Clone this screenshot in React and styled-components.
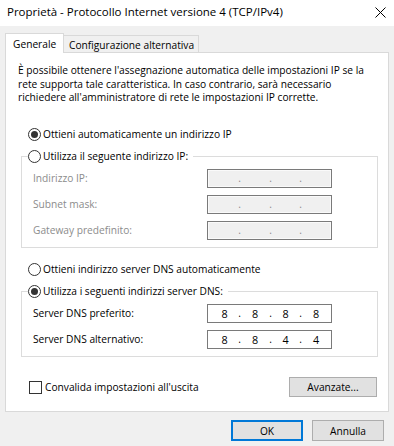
import React from 'react';
import styled, { createGlobalStyle } from 'styled-components';

const GlobalStyle = createGlobalStyle`
    html, body {
        margin: 0;
        padding: 0;
        background: #f0f0f0;
    }
    * {
        box-sizing: border-box;
    }
`

const Window = styled.div`
    width: 394px;
    height: 446px;
    overflow: hidden;
    background: #f0f0f0;
    display: flex;
    flex-direction: column;
    font-family: "Open Sans", "Noto Sans", sans-serif;
    font-size: 10.2px;
    color: #000;
`

const TitleBar = styled.div`
    height: 26px;
    flex-shrink: 0;
    background: #fff;
    display: flex;
    align-items: center;
    justify-content: space-between;
    padding: 0 8px 3px 7px;
`

const Title = styled.span`
    font-size: 11.5px;
`

const CloseButton = styled.span`
    display: flex;
    align-items: center;
    justify-content: center;
    width: 12px;
    height: 12px;
    margin-top: 2px;
`

const Body = styled.div`
    padding: 7px 5px 0 5px;
    display: flex;
    flex-direction: column;
`

const TabStrip = styled.div`
    display: flex;
    align-items: flex-end;
    height: 19px;
    position: relative;
    z-index: 1;
`

const Tab = styled.div`
    line-height: 14px;
    white-space: nowrap;
    ${p => p.$active ? `
        height: 20px;
        margin-bottom: -1px;
        padding: 3px 7px 0 7px;
        width: 59px;
        background: #fff;
        border: 1px solid #d9d9d9;
        border-bottom: none;
    ` : `
        height: 17px;
        padding: 2px 4px 0 5px;
        width: 135px;
        background: #f0f0f0;
        border: 1px solid #d9d9d9;
        border-left: none;
        border-bottom: none;
    `}
`

const Panel = styled.div`
    background: #fff;
    border: 1px solid #d9d9d9;
    display: flex;
    flex-direction: column;
`

const Description = styled.p`
    margin: 11px 12px 0 12px;
    line-height: 13.5px;
`

const OptionRow = styled.label`
    display: flex;
    align-items: center;
    gap: 2px;
    height: 16px;
    line-height: 16px;
    margin-top: ${p => p.$top || 0}px;
    margin-left: ${p => p.$left || 0}px;
    white-space: nowrap;
`

const RadioCircle = styled.span`
    width: 13px;
    height: 13px;
    flex-shrink: 0;
    border: 1px solid #333;
    border-radius: 50%;
    background: #fff;
    display: flex;
    align-items: center;
    justify-content: center;

    &::after {
        content: '';
        width: 7px;
        height: 7px;
        border-radius: 50%;
        background: ${p => p.$checked ? '#333' : 'transparent'};
    }
`

const CheckBox = styled.span`
    width: 13px;
    height: 13px;
    flex-shrink: 0;
    border: 1px solid #333;
    background: #fff;
    margin-right: 1px;
`

const Group = styled.fieldset`
    margin: ${p => p.$top || 0}px 10px 0 15px;
    padding: 0;
    min-width: 0;
    border: 1px solid #dcdcdc;
`

const Legend = styled.legend`
    margin-left: 6px;
    padding: 0 5px 0 0;
`

const Fields = styled.div`
    display: grid;
    grid-template-columns: 174px 125px;
    row-gap: 7px;
    padding: 5px 0 7px 11px;
`

const FieldLabel = styled.span`
    height: 19px;
    line-height: 19px;
    color: ${p => p.$disabled ? '#8c8c8c' : '#000'};
`

const IpBox = styled.div`
    height: 19px;
    border: 1px solid #7a7a7a;
    background: ${p => p.$disabled ? '#f0f0f0' : '#fff'};
    box-shadow: ${p => p.$disabled ? 'inset 0 0 0 1px #fafafa' : 'none'};
    display: grid;
    grid-template-columns: 27px 3px 28px 3px 27px 3px 28px;
    padding-left: 3px;
    line-height: 17px;
    text-align: center;
    color: ${p => p.$disabled ? '#8c8c8c' : '#000'};
`

const Segment = styled.span`
    font-size: 10.8px;
`

const Dot = styled.span``

const BottomRow = styled.div`
    display: flex;
    align-items: center;
    justify-content: space-between;
    margin: 20px 11px 14px 23px;
`

const CheckRow = styled.label`
    display: flex;
    align-items: center;
    gap: 2px;
`

const Button = styled.button`
    font-family: inherit;
    font-size: 10.2px;
    color: #000;
    height: ${p => p.$height || 21}px;
    width: ${p => p.$width || 72}px;
    padding: 0;
    background: #e1e1e1;
    border: ${p => p.$default ? '2px solid #0078d7' : '1px solid #adadad'};
    border-radius: 0;
`

const Footer = styled.div`
    display: flex;
    justify-content: flex-end;
    gap: 9px;
    padding: 8px 5px 0 0;
`

const CloseIcon = () => (
    <svg width="11" height="11" viewBox="0 0 11 11">
        <path d="M0.5 0.5 L10.5 10.5 M10.5 0.5 L0.5 10.5" stroke="#000" strokeWidth="1" fill="none" />
    </svg>
)

const IpField = ({ value, disabled }) => {
    const parts = value ? value.split('.') : ['', '', '', ''];
    return (
        <IpBox $disabled={disabled}>
            {parts.map((part, i) => (
                <React.Fragment key={i}>
                    {i > 0 && <Dot>.</Dot>}
                    <Segment>{part}</Segment>
                </React.Fragment>
            ))}
        </IpBox>
    )
}

const App = () => {
    return (
        <Window>
            <GlobalStyle />
            <TitleBar>
                <Title>Proprietà - Protocollo Internet versione 4 (TCP/IPv4)</Title>
                <CloseButton><CloseIcon /></CloseButton>
            </TitleBar>
            <Body>
                <TabStrip>
                    <Tab $active>Generale</Tab>
                    <Tab>Configurazione alternativa</Tab>
                </TabStrip>
                <Panel>
                    <Description>
                        È possibile ottenere l'assegnazione automatica delle impostazioni IP se la
                        rete supporta tale caratteristica. In caso contrario, sarà necessario
                        richiedere all'amministratore di rete le impostazioni IP corrette.
                    </Description>

                    <OptionRow $top={21.5} $left={22}>
                        <RadioCircle $checked />
                        Ottieni automaticamente un indirizzo IP
                    </OptionRow>

                    <Group $top={6}>
                        <Legend>
                            <OptionRow>
                                <RadioCircle />
                                Utilizza il seguente indirizzo IP:
                            </OptionRow>
                        </Legend>
                        <Fields>
                            <FieldLabel $disabled>Indirizzo IP:</FieldLabel>
                            <IpField disabled />
                            <FieldLabel $disabled>Subnet mask:</FieldLabel>
                            <IpField disabled />
                            <FieldLabel $disabled>Gateway predefinito:</FieldLabel>
                            <IpField disabled />
                        </Fields>
                    </Group>

                    <OptionRow $top={13} $left={22}>
                        <RadioCircle />
                        Ottieni indirizzo server DNS automaticamente
                    </OptionRow>

                    <Group $top={6}>
                        <Legend>
                            <OptionRow>
                                <RadioCircle $checked />
                                Utilizza i seguenti indirizzi server DNS:
                            </OptionRow>
                        </Legend>
                        <Fields>
                            <FieldLabel>Server DNS preferito:</FieldLabel>
                            <IpField value="8.8.8.8" />
                            <FieldLabel>Server DNS alternativo:</FieldLabel>
                            <IpField value="8.8.4.4" />
                        </Fields>
                    </Group>

                    <BottomRow>
                        <CheckRow>
                            <CheckBox />
                            Convalida impostazioni all'uscita
                        </CheckRow>
                        <Button $width={88} $height={20}>Avanzate...</Button>
                    </BottomRow>
                </Panel>
                <Footer>
                    <Button $default>OK</Button>
                    <Button>Annulla</Button>
                </Footer>
            </Body>
        </Window>
    )
}

export default App;
